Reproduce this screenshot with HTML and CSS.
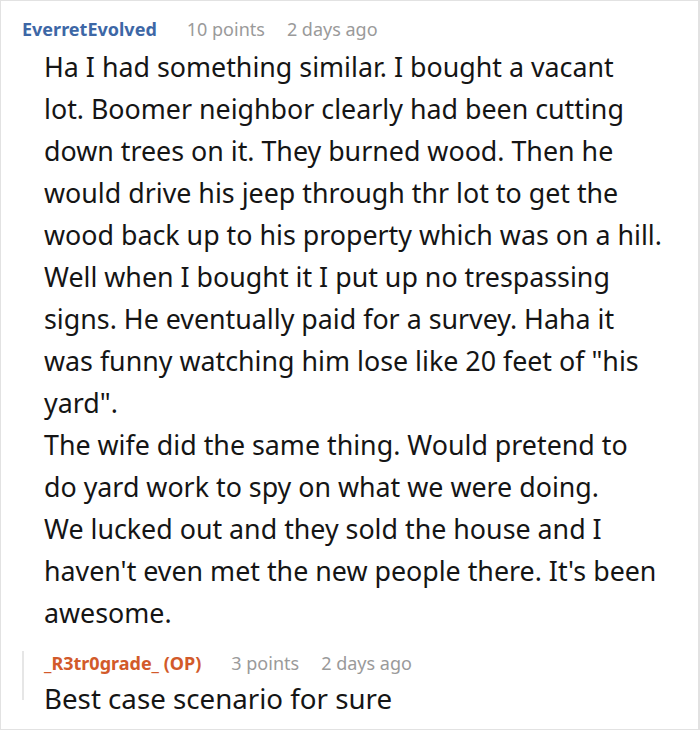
FILE: index.html
```html
<!DOCTYPE html>
<html lang="en">
<head>
    <meta charset="UTF-8">
    <meta name="viewport" content="width=device-width, initial-scale=1.0">
    <title>Comment</title>
    <link rel="stylesheet" href="styles.css">
</head>
<body>
    <div class="comment">
        <div class="comment-meta">
            <span class="author">EverretEvolved</span>
            <span class="points">10 points</span>
            <span class="time">2 days ago</span>
        </div>
        <div class="comment-body">
            Ha I had something similar. I bought a vacant<br>
            lot. Boomer neighbor clearly had been cutting<br>
            down trees on it. They burned wood. Then he<br>
            would drive his jeep through thr lot to get the<br>
            wood back up to his property which was on a hill.<br>
            Well when I bought it I put up no trespassing<br>
            signs. He eventually paid for a survey. Haha it<br>
            was funny watching him lose like 20 feet of "his<br>
            yard".<br>
            The wife did the same thing. Would pretend to<br>
            do yard work to spy on what we were doing.<br>
            We lucked out and they sold the house and I<br>
            haven't even met the new people there. It's been<br>
            awesome.
        </div>

        <div class="reply">
            <div class="comment-meta">
                <span class="author op">_R3tr0grade_ (OP)</span>
                <span class="points">3 points</span>
                <span class="time">2 days ago</span>
            </div>
            <div class="reply-body">Best case scenario for sure</div>
        </div>
    </div>
</body>
</html>
```

FILE: styles.css
```css
body {
    margin: 0;
    background-color: #ffffff;
    font-family: 'Noto Sans', 'Open Sans', sans-serif;
    color: #151515;
}

.comment {
    box-sizing: border-box;
    width: 700px;
    height: 730px;
    border: 1px solid #e2e2e2;
    border-right-width: 2px;
    padding: 16px 0 0 21px;
    overflow: hidden;
}

.comment-meta {
    display: flex;
    font-size: 18px;
    line-height: 24px;
    white-space: nowrap;
}

.author {
    font-weight: bold;
    color: #3d67a6;
    margin-right: 30px;
}

.author.op {
    color: #d25a2a;
}

.points,
.time {
    color: #9a9a9a;
}

.points {
    margin-right: 22px;
}

.comment-body {
    margin-top: 5px;
    padding-left: 22px;
    font-size: 26.8px;
    line-height: 42px;
    white-space: nowrap;
}

.reply {
    margin-top: 29px;
    height: 49px;
    border-left: 2px solid #e6e6e6;
    padding-left: 20px;
}

.reply .comment-meta {
    margin-top: -12px;
}

.reply-body {
    margin-top: 10px;
    font-size: 27.7px;
    line-height: 26px;
    white-space: nowrap;
}
```
